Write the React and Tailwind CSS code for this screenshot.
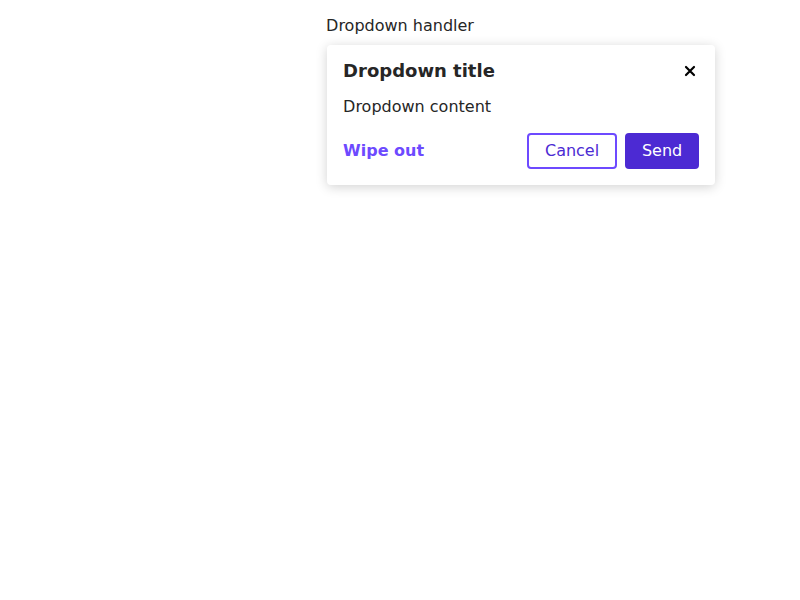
import React from "react";

const Dropdown = () => {
	return (
		<div className="relative inline-block">
			<button className="text-base leading-6 text-[#262626]">Dropdown handler</button>
			<div className="absolute left-[1px] top-[31px] w-[388px] rounded bg-white px-4 pt-[17px] pb-4 shadow-[0_2px_12px_rgba(0,0,0,0.18)]">
				<div className="flex items-center justify-between h-[18px]">
					<h2 className="text-lg font-bold leading-[18px] text-[#262626]">Dropdown title</h2>
					<button className="flex h-5 w-[18px] items-center justify-center text-black">
						<svg width="12" height="12" viewBox="0 0 12 12" fill="none" stroke="currentColor" strokeWidth="2.2" strokeLinecap="round">
							<path d="M2 2L10 10M10 2L2 10" />
						</svg>
					</button>
				</div>
				<p className="mt-[15px] text-base leading-6 text-[#262626]">Dropdown content</p>
				<div className="mt-[14px] flex items-center justify-between">
					<button className="text-base font-bold text-[#6d4aff]">Wipe out</button>
					<div className="flex gap-2">
						<button className="h-9 w-[90px] rounded border-2 border-[#6d4aff] text-base text-[#4c2bd3]">Cancel</button>
						<button className="h-9 w-[74px] rounded bg-[#4c2ad3] text-base text-white">Send</button>
					</div>
				</div>
			</div>
		</div>
	);
};

export default function App() {
	return (
		<div className="min-h-screen bg-white font-['DejaVu_Sans',sans-serif]">
			<div className="flex justify-center pt-[14px]">
				<Dropdown />
			</div>
		</div>
	);
}
